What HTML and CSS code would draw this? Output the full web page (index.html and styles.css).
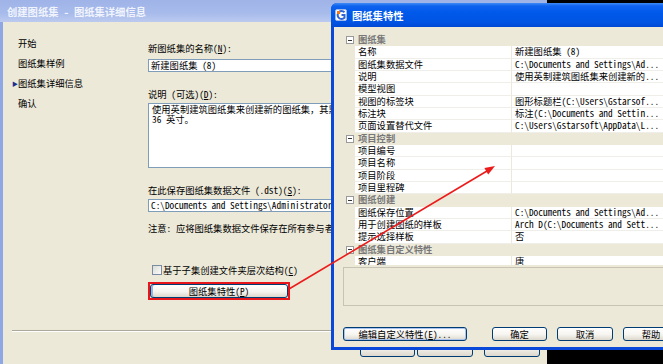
FILE: index.html
```html
<!DOCTYPE html>
<html lang="zh-CN">
<head>
    <meta charset="UTF-8">
    <meta name="viewport" content="width=device-width, initial-scale=1.0">
    <title>创建图纸集 - 图纸集特性</title>
    <link rel="stylesheet" href="styles.css">
</head>
<body>

<!-- Wizard window (behind) -->
<div class="window wizard">
    <div class="titlebar inactive">创建图纸集 - 图纸集详细信息</div>
    <div class="frame">
        <div class="wizard-body">
            <ul class="steps">
                <li>开始</li>
                <li>图纸集样例</li>
                <li class="current">图纸集详细信息</li>
                <li>确认</li>
            </ul>
            <div class="details">
                <div class="label">新图纸集的名称(<u>N</u>):</div>
                <div class="field name-field">新建图纸集 (8)</div>
                <div class="label gap">说明 (可选)(<u>D</u>):</div>
                <div class="field area">使用英制建筑图纸集来创建新的图纸集，其默认图纸尺寸为 24 x<br>36 英寸。</div>
                <div class="label gap">在此保存图纸集数据文件 (.dst)(<u>S</u>):</div>
                <div class="field path-field">C:\Documents and Settings\Administrator\My Documents\AutoCAD Sheet Sets</div>
                <div class="note">注意: 应将图纸集数据文件保存在所有参与者都可以访问的位置。</div>
                <div class="check-row"><span class="checkbox"></span>基于子集创建文件夹层次结构(<u>C</u>)</div>
                <div class="highlight"><button class="btn focus">图纸集特性(<u>P</u>)</button></div>
            </div>
        </div>
        <div class="separator"></div>
        <div class="wizard-buttons">
            <button class="btn back">&lt; 上一步(<u>B</u>)</button>
            <button class="btn next">下一步(<u>N</u>) &gt;</button>
            <button class="btn cancel">取消</button>
        </div>
    </div>
</div>

<!-- Sheet set properties dialog (front) -->
<div class="window props">
    <div class="titlebar active">
        <span class="app-icon">
            <svg width="12" height="12" viewBox="0 0 12 12">
                <rect x="0.5" y="0.5" width="11" height="11" rx="1.5" fill="#fff" stroke="#9fb8e8"/>
                <path d="M9.5 3.2 A4 4 0 1 0 9.5 8.8 L9.5 6 L6.5 6" fill="none" stroke="#2f63d8" stroke-width="2"/>
                <rect x="2" y="2" width="3" height="3" fill="#f07a1a"/>
            </svg>
        </span>
        图纸集特性
    </div>
    <div class="props-body">
        <div class="grid">
            <div class="row cat"><span class="gutter"><i class="toggle"></i></span><span class="name">图纸集</span></div>
            <div class="row"><span class="gutter"></span><span class="name">名称</span><span class="value">新建图纸集 (8)</span></div>
            <div class="row"><span class="gutter"></span><span class="name">图纸集数据文件</span><span class="value">C:\Documents and Settings\Ad...</span></div>
            <div class="row"><span class="gutter"></span><span class="name">说明</span><span class="value">使用英制建筑图纸集来创建新的...</span></div>
            <div class="row"><span class="gutter"></span><span class="name">模型视图</span><span class="value"></span></div>
            <div class="row"><span class="gutter"></span><span class="name">视图的标签块</span><span class="value">图形标题栏(C:\Users\Gstarsof...</span></div>
            <div class="row"><span class="gutter"></span><span class="name">标注块</span><span class="value">标注(C:\Documents and Settin...</span></div>
            <div class="row"><span class="gutter"></span><span class="name">页面设置替代文件</span><span class="value">C:\Users\Gstarsoft\AppData\L...</span></div>
            <div class="row cat"><span class="gutter"><i class="toggle"></i></span><span class="name">项目控制</span></div>
            <div class="row"><span class="gutter"></span><span class="name">项目编号</span><span class="value"></span></div>
            <div class="row"><span class="gutter"></span><span class="name">项目名称</span><span class="value"></span></div>
            <div class="row"><span class="gutter"></span><span class="name">项目阶段</span><span class="value"></span></div>
            <div class="row"><span class="gutter"></span><span class="name">项目里程碑</span><span class="value"></span></div>
            <div class="row cat"><span class="gutter"><i class="toggle"></i></span><span class="name">图纸创建</span></div>
            <div class="row"><span class="gutter"></span><span class="name">图纸保存位置</span><span class="value">C:\Documents and Settings\Ad...</span></div>
            <div class="row"><span class="gutter"></span><span class="name">用于创建图纸的样板</span><span class="value">Arch D(C:\Documents and Sett...</span></div>
            <div class="row"><span class="gutter"></span><span class="name">提示选择样板</span><span class="value">否</span></div>
            <div class="row cat"><span class="gutter"><i class="toggle"></i></span><span class="name">图纸集自定义特性</span></div>
            <div class="row"><span class="gutter"></span><span class="name">客户端</span><span class="value">唐</span></div>
        </div>
        <div class="description"></div>
        <div class="dialog-buttons">
            <button class="btn default edit">编辑自定义特性(<u>E</u>)...</button>
            <button class="btn ok">确定</button>
            <button class="btn">取消</button>
            <button class="btn">帮助</button>
        </div>
    </div>
</div>

<!-- Red annotation arrow -->
<svg class="arrow" width="663" height="364" viewBox="0 0 663 364">
    <line x1="289" y1="289" x2="487" y2="171" stroke="#ec1b1b" stroke-width="1.6"/>
    <polygon points="495,166 488.2,174.4 484.4,168" fill="#ec1b1b"/>
</svg>

</body>
</html>
```

FILE: styles.css
```css
* {
    box-sizing: border-box;
}
body {
    margin: 0;
    width: 663px;
    height: 364px;
    overflow: hidden;
    background: #000;
    font-family: "Noto Sans Mono CJK SC", "Noto Sans CJK SC", "Liberation Mono", monospace;
    font-size: 9.3px;
    color: #000;
}
u {
    text-decoration: underline;
    text-underline-offset: 1px;
}
.window {
    position: absolute;
    display: flex;
    flex-direction: column;
}
.titlebar {
    flex: none;
    color: #fff;
    font-weight: bold;
    font-size: 10.3px;
    white-space: nowrap;
    display: flex;
    align-items: center;
}

/* wizard window */
.wizard {
    left: 0;
    top: 0;
    width: 547px;
    height: 380px;
}
.titlebar.inactive {
    height: 22px;
    padding-left: 7px;
    color: #f1f4fc;
    background: linear-gradient(#a0b3e8, #a7bbeb 60%, #bccaef);
}
.frame {
    flex: 1;
    background: #ece9d8;
    border-left: 3px solid #8ea8e6;
}
.wizard-body {
    height: 306px;
    display: flex;
}
.steps {
    list-style: none;
    margin: 0;
    padding: 11px 0 0 15px;
    width: 145px;
    flex: none;
}
.steps li {
    line-height: 20px;
    height: 20px;
}
.steps li.current::before {
    content: "▶";
    display: inline-block;
    width: 6px;
    margin-left: -6px;
    font-size: 6px;
    color: #1b2f8f;
    vertical-align: 1px;
}
.details {
    flex: 1;
    padding-top: 20px;
    white-space: nowrap;
}
.label {
    line-height: 12px;
    height: 12px;
}
.label.gap {
    margin-top: 16px;
}
.field {
    margin-top: 5px;
    height: 13px;
    border: 1px solid #7f9db9;
    background: #fff;
    padding-left: 2px;
    line-height: 11px;
    overflow: hidden;
}
.field.area {
    margin-top: 3px;
    height: 65px;
    padding: 0 0 0 3px;
    line-height: 10px;
}
.field.path-field {
    margin-top: 3px;
}
.note {
    margin-top: 10px;
    line-height: 12px;
}
.check-row {
    margin-top: 30px;
    line-height: 12px;
    padding-left: 4px;
    display: flex;
    align-items: center;
}
.checkbox {
    width: 10px;
    height: 10px;
    margin-right: 1px;
    border: 1px solid #7b8ba3;
    background: linear-gradient(135deg, #dcdcd6, #fbfbf9);
}
.highlight {
    margin-top: 6px;
    width: 142px;
    height: 18px;
    border: 2px solid #e8151b;
}
.highlight .btn {
    width: 100%;
    height: 14px;
    box-shadow: inset 2px 0 0 #9db4d8;
}
.separator {
    margin: 2px 0 0 9px;
    border-top: 1px solid #aca899;
    border-bottom: 1px solid #fff;
}
.wizard-buttons {
    margin-top: 4px;
    display: flex;
    justify-content: flex-end;
    padding-right: 7px;
}
.wizard-buttons .btn {
    height: 21px;
    width: 56px;
    padding-bottom: 8px;
}
.wizard-buttons .back {
    width: 55px;
    margin-right: 2px;
}
.wizard-buttons .next {
    margin-right: 11px;
}

/* buttons */
.btn {
    font: inherit;
    color: #000;
    padding: 0;
    margin: 0;
    height: 14px;
    line-height: 12px;
    border: 1px solid #003c74;
    border-radius: 3px;
    background: linear-gradient(#fff, #f5f4ef 55%, #ddd8cd);
    text-align: center;
    white-space: nowrap;
}
.btn.default {
    box-shadow: inset 0 0 0 1px #a9c3ee;
}

/* properties dialog */
.props {
    left: 331px;
    top: 3px;
    width: 340px;
    height: 347px;
    background: #0a48da;
    border-radius: 6px 6px 0 0;
}
.titlebar.active {
    height: 24px;
    padding-left: 4px;
    gap: 5px;
    border-radius: 6px 6px 0 0;
    background: linear-gradient(#3f8cf6 0, #0f62ee 3px, #0059ea 40%, #0054e3 80%, #0049d4 100%);
}
.app-icon {
    width: 12px;
    height: 12px;
    display: flex;
}
.props-body {
    flex: 1;
    margin: 0 3px 3px;
    background: #ece9d8;
    overflow: hidden;
}
.grid {
    margin-top: 7px;
    height: 231px;
    overflow: hidden;
    white-space: nowrap;
}
.row {
    display: flex;
    height: 12.33px;
    line-height: 11px;
}
.gutter {
    width: 21px;
    flex: none;
    background: #ece9d8;
    padding: 2px 0 0 12px;
}
.name {
    width: 157px;
    flex: none;
    padding-left: 3px;
    background: #fff;
    border-right: 1px solid #ece9d8;
    border-bottom: 1px solid #efeee8;
}
.value {
    flex: 1;
    padding-left: 3px;
    background: #fff;
    border-bottom: 1px solid #efeee8;
    overflow: hidden;
}
.row.cat {
    background: #ece9d8;
}
.row.cat .name {
    width: auto;
    background: none;
    border: none;
    color: #787878;
    font-weight: bold;
}
.toggle {
    display: block;
    width: 8px;
    height: 8px;
    border: 1px solid #9a9a9a;
    background: #fff;
    position: relative;
}
.toggle::after {
    content: "";
    position: absolute;
    left: 1px;
    top: 2.5px;
    width: 4px;
    height: 1px;
    background: #333;
}
.description {
    margin: 2px 0 0 9px;
    height: 39px;
    border: 1px solid #c8c4b4;
    border-right: none;
}
.dialog-buttons {
    margin-top: 21px;
    padding-left: 9px;
    display: flex;
    gap: 10px;
}
.dialog-buttons .btn {
    width: 56px;
    flex: none;
}
.dialog-buttons .edit {
    width: 124px;
    margin-right: 15px;
}
.dialog-buttons .ok {
    width: 55px;
}

/* annotation */
.arrow {
    position: absolute;
    left: 0;
    top: 0;
    pointer-events: none;
}
```
